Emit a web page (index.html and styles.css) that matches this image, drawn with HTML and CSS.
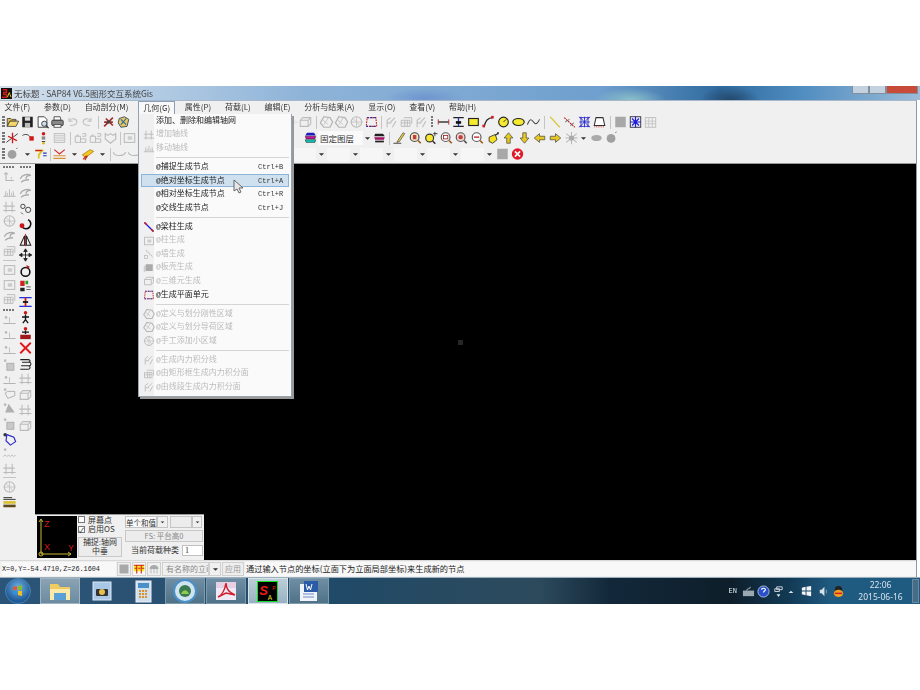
FILE: index.html
```html
<!DOCTYPE html>
<html lang="zh">
<head>
<meta charset="utf-8">
<title>SAP84</title>
<link rel="stylesheet" href="styles.css">
</head>
<body>
<svg class="defs" aria-hidden="true">
<symbol id="open" viewBox="0 0 16 16"><path d="M2 4h4l1 1h5v2H5L2 13z" fill="#e8c040" stroke="#444"/><path d="M5 7h10l-3 6H2z" fill="#f5d868" stroke="#444"/></symbol>
<symbol id="save" viewBox="0 0 16 16"><rect x="2" y="2" width="12" height="12" fill="#222"/><rect x="5" y="2.5" width="6" height="4" fill="#ddd"/><rect x="5" y="9" width="6" height="5" fill="#bbb"/></symbol>
<symbol id="prev" viewBox="0 0 16 16"><path d="M3 2h7l3 3v9H3z" fill="#fff" stroke="#333"/><circle cx="10" cy="10" r="3" fill="#cde" stroke="#333"/><path d="M12 12l3 3" stroke="#333" stroke-width="1.5"/></symbol>
<symbol id="print" viewBox="0 0 16 16"><path d="M4 2h7l1 4H4z" fill="#fff" stroke="#444"/><rect x="1.5" y="6" width="13" height="6" rx="1" fill="#888" stroke="#333"/><rect x="4" y="11" width="8" height="3" fill="#fff" stroke="#444"/></symbol>
<symbol id="undo" viewBox="0 0 16 16"><path d="M4 6c3-3 9-2 9 2s-4 4-8 4M4 3v4h4" fill="none" stroke="#c4c4c4" stroke-width="1.3"/></symbol>
<symbol id="redo" viewBox="0 0 16 16"><path d="M12 6C9 3 3 4 3 8s4 4 8 4M12 3v4H8" fill="none" stroke="#c4c4c4" stroke-width="1.3"/></symbol>
<symbol id="bug" viewBox="0 0 16 16"><path d="M3 13L13 3M5 4l8 8M3 8h10" stroke="#a03030" stroke-width="2"/><circle cx="8" cy="8" r="2" fill="#444"/></symbol>
<symbol id="cube" viewBox="0 0 16 16"><path d="M3 4l6-2 5 3-2 8-7 1-3-5z" fill="#e8c860" stroke="#345" /><path d="M5 5l6 6M11 4l-6 7" stroke="#26a" stroke-width="1.2"/></symbol>
<symbol id="box" viewBox="0 0 16 16"><path d="M2 6h9v7H2zM2 6l3-3h9v7l-3 3M11 6l3-3" fill="none" stroke="#bbb" stroke-width="1.2"/></symbol>
<symbol id="hex" viewBox="0 0 16 16"><path d="M5 2l7 1 3 5-3 6-7 0-4-5z" fill="none" stroke="#b4b4b4" stroke-width="1.4"/><path d="M4 6l6 5M10 3L5 11" stroke="#c4c4c4"/></symbol>
<symbol id="diam" viewBox="0 0 16 16"><circle cx="8" cy="8" r="6" fill="none" stroke="#bbb" stroke-width="1.3"/><path d="M1 8h14M8 2v12M4 4l8 8" stroke="#c4c4c4"/></symbol>
<symbol id="plane" viewBox="0 0 16 16"><path d="M3 3h10l1 10H2z" fill="none" stroke="#c02020" stroke-dasharray="2 1" stroke-width="1.2"/><path d="M3 3h10M2 13h12" stroke="#2030c0" stroke-dasharray="2 2" stroke-width="1.2"/></symbol>
<symbol id="curveg" viewBox="0 0 16 16"><path d="M3 14V6l4-3M7 8l5-5M3 9h5M9 14l4-7" fill="none" stroke="#c0c0c0" stroke-width="1.3"/></symbol>
<symbol id="grid3" viewBox="0 0 16 16"><path d="M2 6h10v7H2zM5 3h9v7M2 9h10M6 6v7M9 6v7" fill="none" stroke="#bbb" stroke-width="1.1"/></symbol>
<symbol id="lineh" viewBox="0 0 16 16"><path d="M2 8h12" stroke="#222" stroke-width="1.5"/><path d="M2 5v6M14 5v6" stroke="#c02020"/></symbol>
<symbol id="ibeam" viewBox="0 0 16 16"><path d="M2 3h12M2 13h12" stroke="#222" stroke-width="1.6"/><path d="M8 3v10" stroke="#2030c0" stroke-width="1.5"/><path d="M5 7h6v3H5z" fill="#111"/></symbol>
<symbol id="rect" viewBox="0 0 16 16"><rect x="2.500" y="4" width="11" height="8" fill="#f6ea30" stroke="#222" stroke-width="1.300"/></symbol>
<symbol id="arc" viewBox="0 0 16 16"><path d="M3 14C4 7 8 3 13 3" fill="none" stroke="#222" stroke-width="1.400"/><rect x="1" y="11" width="3" height="3" fill="#d02020"/><rect x="11" y="1" width="3" height="3" fill="#d02020"/></symbol>
<symbol id="circ" viewBox="0 0 16 16"><circle cx="8" cy="8" r="5.500" fill="#f6ea30" stroke="#222" stroke-width="1.300"/><path d="M8 8l3-3" stroke="#222"/></symbol>
<symbol id="ell" viewBox="0 0 16 16"><ellipse cx="8" cy="8" rx="6.500" ry="4" fill="#f6ea30" stroke="#222" stroke-width="1.300"/></symbol>
<symbol id="wave" viewBox="0 0 16 16"><path d="M1 11c3-8 5-6 7-3s4 3 7-3" fill="none" stroke="#444" stroke-width="1.200"/></symbol>
<symbol id="waveg" viewBox="0 0 16 16"><circle cx="3" cy="3" r="1.500" fill="#bbb"/><path d="M1 11l2-2 2 2 2-2 2 2 2-2 2 2 2-2" fill="none" stroke="#bbb" stroke-width="1.100"/></symbol>
<symbol id="diag" viewBox="0 0 16 16"><path d="M3 2l11 12" stroke="#d8c840" stroke-width="1.500"/></symbol>
<symbol id="diag2" viewBox="0 0 16 16"><path d="M2 3l12 11" stroke="#c02020" stroke-width="1.400" stroke-dasharray="2 1"/><path d="M3 8l5-3M9 12l4-3" stroke="#555"/></symbol>
<symbol id="wallg" viewBox="0 0 16 16"><path d="M4 3l9 9" stroke="#bbb" stroke-width="1.500" stroke-dasharray="2 1"/><rect x="2" y="10" width="4" height="4" fill="none" stroke="#bbb"/></symbol>
<symbol id="netb" viewBox="0 0 16 16"><path d="M2 3h12M2 8h12M2 13h12M4 2v12M8 2v12M12 2v12M2 2l12 12M14 2L2 14" stroke="#2828c8" fill="none"/></symbol>
<symbol id="trap" viewBox="0 0 16 16"><path d="M4 3h8l2 9H2z" fill="#fff" stroke="#333" stroke-width="1.200"/><path d="M2 13.500h12" stroke="#c02020" stroke-dasharray="1 1"/></symbol>
<symbol id="sq" viewBox="0 0 16 16"><rect x="2" y="2" width="12" height="12" fill="#a8a8a8"/></symbol>
<symbol id="netbx" viewBox="0 0 16 16"><rect x="2" y="2" width="12" height="12" fill="#eef" stroke="#223"/><path d="M4 4l8 8M12 4l-8 8M8 2v12M2 8h12" stroke="#1c1cd0" stroke-width="1.400"/></symbol>
<symbol id="grs" viewBox="0 0 16 16"><rect x="2" y="3" width="12" height="11" fill="none" stroke="#bbb"/><path d="M2 7h12M2 10h12M6 3v11M10 3v11" stroke="#c4c4c4"/></symbol>
<symbol id="star" viewBox="0 0 16 16"><path d="M1 13L14 3" stroke="#333"/><path d="M8 2v12M3 6l10 5" stroke="#d01818" stroke-width="1.500"/></symbol>
<symbol id="dart" viewBox="0 0 16 16"><path d="M1 5c4-2 7-1 9 2" fill="none" stroke="#333"/><rect x="9" y="6" width="5" height="5" fill="#d01818"/></symbol>
<symbol id="dots" viewBox="0 0 16 16"><circle cx="8" cy="3" r="2" fill="#d01818"/><path d="M6 7h4M10 9H6M6 12h4M9 14H7" stroke="#333"/><circle cx="8" cy="14" r="1.500" fill="#d8c020"/></symbol>
<symbol id="hatch" viewBox="0 0 16 16"><rect x="2" y="3" width="12" height="10" fill="none" stroke="#bbb"/><path d="M2 5h12M2 7h12M2 9h12M2 11h12" stroke="#c8c8c8"/></symbol>
<symbol id="colm" viewBox="0 0 16 16"><path d="M2 6h6v7H2zM8 9h6v4H8M10 3h4v3h-4M5 6V4M5 4l-2 2" fill="none" stroke="#bbb" stroke-width="1.100"/></symbol>
<symbol id="shld" viewBox="0 0 16 16"><path d="M2 3l3 2 3-2 3 2 3-2v6l-6 5-6-5z" fill="none" stroke="#bbb" stroke-width="1.300"/></symbol>
<symbol id="frm" viewBox="0 0 16 16"><rect x="2" y="3" width="12" height="10" fill="none" stroke="#bbb" stroke-width="1.200"/><rect x="6" y="6" width="5" height="4" fill="#ccc"/></symbol>
<symbol id="graybox" viewBox="0 0 16 16"><path d="M4 3h9v9H4z" fill="#aaa"/><path d="M1 6l3-3v9l-3 2z" fill="#ccc"/></symbol>
<symbol id="layers" viewBox="0 0 16 16"><path d="M4 2h8l2 3H2z" fill="#1c1cc0"/><path d="M2 6h12l-1 3H3z" fill="#d010a0" stroke="#222" stroke-width=".6"/><path d="M2 10h12l-1 3H3z" fill="#10c8b8" stroke="#222" stroke-width=".6"/></symbol>
<symbol id="layers2" viewBox="0 0 16 16"><path d="M3 3h9l2 3H2z" fill="#222"/><path d="M2 7h12l-1 3H3z" fill="#a01060"/><path d="M3 11h10v2H3z" fill="#222"/></symbol>
<symbol id="pen" viewBox="0 0 16 16"><path d="M6 11l6-9 2 1-6 9-3 1z" fill="#e8d040" stroke="#333" stroke-width=".7"/><path d="M1 14h9" stroke="#333"/></symbol>
<symbol id="zoom" viewBox="0 0 16 16"><circle cx="7" cy="7" r="5" fill="#f4e8c8" stroke="#444" stroke-width="1.300"/><rect x="5" y="4.500" width="4" height="5" fill="#c04040"/><path d="M11 11l3 3" stroke="#a06020" stroke-width="2"/></symbol>
<symbol id="zoomy" viewBox="0 0 16 16"><circle cx="7" cy="8" r="4.500" fill="#f8e830" stroke="#333" stroke-width="1.300"/><path d="M10.500 11.500l3 3" stroke="#333" stroke-width="1.800"/><path d="M13 1v5M11 3h5" stroke="#333"/></symbol>
<symbol id="zoomw" viewBox="0 0 16 16"><circle cx="7" cy="7" r="5" fill="#fff" stroke="#555" stroke-width="1.300"/><rect x="4.500" y="5" width="5" height="4" fill="none" stroke="#a02020"/><path d="M11 11l3 3" stroke="#a06020" stroke-width="2"/></symbol>
<symbol id="zoomr" viewBox="0 0 16 16"><circle cx="7" cy="7" r="5" fill="#f0d8d0" stroke="#555" stroke-width="1.300"/><circle cx="7" cy="7" r="2.500" fill="#c04040"/><path d="M11 11l3 3" stroke="#555" stroke-width="2"/></symbol>
<symbol id="zoomm" viewBox="0 0 16 16"><circle cx="7" cy="7" r="5" fill="#fff" stroke="#555" stroke-width="1.300"/><path d="M4 7h6" stroke="#c02020" stroke-width="1.500"/><path d="M11 11l3 3" stroke="#a06020" stroke-width="2"/></symbol>
<symbol id="pan" viewBox="0 0 16 16"><path d="M3 7l7-3 2 6-5 4-4-2z" fill="#f6e020" stroke="#333"/><path d="M10 5l4-3M13 1v3" stroke="#222" stroke-width="1.300"/></symbol>
<symbol id="up" viewBox="0 0 16 16"><path d="M8 2l5 6h-3v6H6V8H3z" fill="#e8c820" stroke="#444" stroke-width=".8"/></symbol>
<symbol id="down" viewBox="0 0 16 16"><path d="M8 14l5-6h-3V2H6v6H3z" fill="#e8c820" stroke="#444" stroke-width=".8"/></symbol>
<symbol id="left" viewBox="0 0 16 16"><path d="M2 8l6-5v3h6v4H8v3z" fill="#e8c820" stroke="#444" stroke-width=".8"/></symbol>
<symbol id="right" viewBox="0 0 16 16"><path d="M14 8L8 3v3H2v4h6v3z" fill="#e8c820" stroke="#444" stroke-width=".8"/></symbol>
<symbol id="spark" viewBox="0 0 16 16"><path d="M2 3l12 10M14 3L2 13M8 1v14M1 8h14" stroke="#b8b8b8" stroke-width="1.200"/><circle cx="8" cy="8" r="3" fill="#aaa"/></symbol>
<symbol id="eye" viewBox="0 0 16 16"><ellipse cx="8" cy="8" rx="6" ry="3.500" fill="#aaa"/></symbol>
<symbol id="ball" viewBox="0 0 16 16"><circle cx="7.500" cy="8.500" r="5" fill="#a0a0a0"/><path d="M12 2l2-1" stroke="#888"/></symbol>
<symbol id="yeq" viewBox="0 0 16 16"><path d="M2 4h8L6 9v4" fill="none" stroke="#e0c020" stroke-width="2"/><path d="M2 4h8" stroke="#d02020" stroke-width="1.500"/><path d="M11 7h4M11 10h4" stroke="#2030c0" stroke-width="1.400"/></symbol>
<symbol id="redm" viewBox="0 0 16 16"><path d="M2 3l6 5 6-5" fill="none" stroke="#d03030" stroke-width="1.400"/><path d="M1 10h14M1 13h14" stroke="#d89030" stroke-width="1.400"/></symbol>
<symbol id="yellw" viewBox="0 0 16 16"><path d="M2 9l9-6 4 2-9 7z" fill="#f4c820" stroke="#a07000" stroke-width=".8"/><path d="M3 14l4-4M8 10l-3 5" stroke="#c03020" stroke-width="1.300"/></symbol>
<symbol id="smile" viewBox="0 0 16 16"><path d="M1 6c1 5 12 5 14 0" fill="none" stroke="#b8b8b8" stroke-width="1.300"/></symbol>
<symbol id="redx" viewBox="0 0 16 16"><circle cx="8" cy="8" r="6.500" fill="#e01828"/><path d="M5 5l6 6M11 5l-6 6" stroke="#fff" stroke-width="1.800"/></symbol>
<symbol id="axis" viewBox="0 0 16 16"><path d="M4 3v9h9M4 3L2 5M4 3l2 2" fill="none" stroke="#b4b4b4" stroke-width="1.200"/><path d="M10 8v3" stroke="#c0c0c0"/></symbol>
<symbol id="comb" viewBox="0 0 16 16"><path d="M1 13h14M3 13l1-6M8 13V5M13 13l-1-6M5 13l1-4M11 13l-1-4" stroke="#bbb" stroke-width="1.100"/></symbol>
<symbol id="axisb" viewBox="0 0 16 16"><path d="M4 2v12M11 2v12M1 12h14M1 7h13" stroke="#bbb" stroke-width="1.200"/></symbol>
<symbol id="hook" viewBox="0 0 16 16"><path d="M2 9c2-5 8-6 12-4-4 0-6 2-5 4M3 13c3-3 6-3 9-3" fill="none" stroke="#aaa" stroke-width="1.500"/></symbol>
<symbol id="rings" viewBox="0 0 16 16"><circle cx="5" cy="5" r="2.500" fill="none" stroke="#333"/><circle cx="11" cy="9" r="3" fill="none" stroke="#333"/><path d="M3 12l2 2" stroke="#333"/></symbol>
<symbol id="rot" viewBox="0 0 16 16"><path d="M11 3a5.500 5.500 0 1 1-7 8" fill="none" stroke="#111" stroke-width="1.800"/><circle cx="4" cy="10" r="2.800" fill="#c81818"/></symbol>
<symbol id="mirror" viewBox="0 0 16 16"><path d="M7 3L2 14h5zM9 3l5 11H9z" fill="none" stroke="#222" stroke-width="1.200"/><path d="M8 1v14" stroke="#a02020"/></symbol>
<symbol id="move" viewBox="0 0 16 16"><path d="M8 1v14M1 8h14M8 1L6 4h4zM8 15l-2-3h4zM1 8l3-2v4zM15 8l-3-2v4z" fill="#222" stroke="#222"/></symbol>
<symbol id="rotb" viewBox="0 0 16 16"><circle cx="8" cy="9" r="5" fill="none" stroke="#111" stroke-width="1.800"/><path d="M9 1l4 2-3 3z" fill="#b02020"/></symbol>
<symbol id="leg" viewBox="0 0 16 16"><rect x="2" y="2" width="5" height="6" fill="#d02020"/><rect x="8" y="2" width="3" height="4" fill="#20a020"/><path d="M2 10h5v4H2z" fill="#222"/><path d="M9 9h5M9 12h5" stroke="#555"/></symbol>
<symbol id="beamr" viewBox="0 0 16 16"><path d="M1 3h14" stroke="#2030e0" stroke-width="1.500"/><path d="M1 13h14" stroke="#2030e0" stroke-width="1.500"/><path d="M8 3v10" stroke="#d01818" stroke-width="2"/><path d="M5 8h6" stroke="#111" stroke-width="2"/></symbol>
<symbol id="man" viewBox="0 0 16 16"><circle cx="8" cy="3" r="2" fill="#d01818"/><path d="M8 5v6M4 8h8M8 11l-3 4M8 11l3 4" stroke="#111" stroke-width="1.500"/></symbol>
<symbol id="mans" viewBox="0 0 16 16"><circle cx="8" cy="3" r="2" fill="#d01818"/><path d="M8 5v4M4 7h8" stroke="#111" stroke-width="1.500"/><rect x="2" y="10" width="12" height="5" fill="#a01818"/></symbol>
<symbol id="dotl" viewBox="0 0 16 16"><path d="M1 12h14" stroke="#aaa"/><circle cx="4" cy="5" r="1.500" fill="#bbb"/><path d="M8 5v6" stroke="#bbb"/></symbol>
<symbol id="xred" viewBox="0 0 16 16"><path d="M2 2l12 12M14 2L2 14" stroke="#e01818" stroke-width="2.200"/></symbol>
<symbol id="coil" viewBox="0 0 16 16"><path d="M2 3h9c3 0 3 3 0 3H4M4 6h8c3 0 3 4 0 4H3M3 10h8c3 0 3 4 0 4H2" fill="none" stroke="#222" stroke-width="1.200"/></symbol>
<symbol id="boxd" viewBox="0 0 16 16"><circle cx="3" cy="3" r="1.500" fill="#bbb"/><rect x="5" y="6" width="8" height="8" fill="#c8c8c8" stroke="#aaa"/></symbol>
<symbol id="ddp" viewBox="0 0 16 16"><circle cx="3" cy="3" r="1.500" fill="#bbb"/><path d="M3 7l3 6 8-3V5H6z" fill="none" stroke="#aaa"/></symbol>
<symbol id="cone" viewBox="0 0 16 16"><circle cx="3" cy="3" r="1.500" fill="#bbb"/><path d="M7 2l7 10H3z" fill="#b0b0b0"/></symbol>
<symbol id="plbl" viewBox="0 0 16 16"><circle cx="3" cy="3" r="2" fill="#333"/><path d="M5 3l8 3 2 5-6 4-5-5z" fill="none" stroke="#2828c8" stroke-width="1.300"/></symbol>
<symbol id="rul" viewBox="0 0 16 16"><path d="M1 3h10M1 5h14" stroke="#222"/><rect x="1" y="7" width="14" height="3" fill="#d8c030"/><rect x="1" y="11" width="14" height="3" fill="#604818"/></symbol>
<symbol id="lnb" viewBox="0 0 16 16"><path d="M2 2l12 12" stroke="#1818d0" stroke-width="1.600"/><path d="M2 2l3 3" stroke="#d01818" stroke-width="2.200"/><path d="M11 11l3 3" stroke="#d01818" stroke-width="2.200"/></symbol>
<symbol id="grip" viewBox="0 0 16 16"><path d="M3 2v12M12 5v7" stroke="#bbb" stroke-width="1.300"/></symbol>
<symbol id="arrow" viewBox="0 0 10 16"><path d="M2 7h6l-3 3z" fill="#333"/></symbol>
</svg>

<div class="app">
  <div class="title">
    <svg class="logo" viewBox="0 0 12 12"><rect width="12" height="12" fill="#111"/><path d="M2 2h4v3H3v2h3v3H1" fill="none" stroke="#d01818" stroke-width="1.600"/><path d="M7 10l2-5 2 5" stroke="#e8d820" fill="none"/></svg>
    <span class="title-text">无标题 - SAP84 V6.5图形交互系统Gis</span>
    <div class="winctl"><span class="wb"></span><span class="wb"></span><span class="wb wb-x"></span></div>
  </div>
  <div class="client">
    <nav class="menubar">
      <span>文件(F)</span><span>参数(D)</span><span>自动剖分(M)</span><span class="open">几何(G)</span><span>属性(P)</span><span>荷载(L)</span><span>编辑(E)</span><span>分析与结果(A)</span><span>显示(O)</span><span>查看(V)</span><span>帮助(H)</span>
    </nav>
    <div class="tools">
      <div class="row">
        <div class="lgroup">
          <i class="gr"></i>
          <svg class="i"><use href="#open"/></svg><svg class="i"><use href="#save"/></svg><svg class="i"><use href="#prev"/></svg><svg class="i"><use href="#print"/></svg><svg class="i"><use href="#undo"/></svg><svg class="i"><use href="#redo"/></svg>
          <i class="sep"></i>
          <svg class="i"><use href="#bug"/></svg><svg class="i"><use href="#cube"/></svg>
        </div>
        <div class="rgroup">
          <svg class="i i-grip"><use href="#grip"/></svg>
          <svg class="i"><use href="#box"/></svg><i class="sep"></i>
          <svg class="i"><use href="#hex"/></svg><svg class="i"><use href="#hex"/></svg><svg class="i"><use href="#diam"/></svg><svg class="i"><use href="#plane"/></svg><i class="sep sep-n"></i>
          <svg class="i"><use href="#curveg"/></svg><svg class="i"><use href="#grid3"/></svg><svg class="i"><use href="#curveg"/></svg><i class="gr gr-d"></i>
          <svg class="i"><use href="#lineh"/></svg><svg class="i"><use href="#ibeam"/></svg><svg class="i"><use href="#rect"/></svg><svg class="i"><use href="#arc"/></svg><svg class="i"><use href="#circ"/></svg><svg class="i"><use href="#ell"/></svg><svg class="i"><use href="#wave"/></svg><i class="sep"></i>
          <svg class="i"><use href="#diag"/></svg><svg class="i"><use href="#diag2"/></svg><svg class="i"><use href="#netb"/></svg><svg class="i"><use href="#trap"/></svg><i class="sep"></i>
          <svg class="i"><use href="#sq"/></svg><svg class="i"><use href="#netbx"/></svg><svg class="i"><use href="#grs"/></svg>
        </div>
      </div>
      <div class="row">
        <div class="lgroup">
          <i class="gr gr-s"></i>
          <svg class="i"><use href="#star"/></svg><svg class="i sh"><use href="#dart"/></svg><svg class="i"><use href="#dots"/></svg><svg class="i sh"><use href="#hatch"/></svg>
          <i class="sep"></i>
          <svg class="i"><use href="#colm"/></svg><svg class="i"><use href="#colm"/></svg><svg class="i"><use href="#shld"/></svg>
          <i class="sep sep-t"></i>
          <svg class="i"><use href="#frm"/></svg>
        </div>
        <div class="rgroup rgroup-2">
          <svg class="i"><use href="#layers"/></svg>
          <div class="layercombo">固定图层</div>
          <svg class="dd"><use href="#arrow"/></svg>
          <svg class="i"><use href="#layers2"/></svg><i class="sep sep-t"></i>
          <div class="tight">
            <svg class="i"><use href="#pen"/></svg><svg class="i"><use href="#zoom"/></svg><svg class="i"><use href="#zoomy"/></svg><svg class="i"><use href="#zoomw"/></svg><svg class="i"><use href="#zoomr"/></svg><svg class="i"><use href="#zoomm"/></svg><svg class="i"><use href="#pan"/></svg><svg class="i"><use href="#up"/></svg><svg class="i"><use href="#down"/></svg><svg class="i"><use href="#left"/></svg><svg class="i"><use href="#right"/></svg><svg class="i"><use href="#spark"/></svg>
            <svg class="dd"><use href="#arrow"/></svg><svg class="i"><use href="#eye"/></svg><svg class="i"><use href="#ball"/></svg>
          </div>
        </div>
      </div>
      <div class="row">
        <div class="lgroup">
          <i class="gr gr-s"></i>
          <svg class="i"><use href="#ball"/></svg><svg class="dd dd-m"><use href="#arrow"/></svg><svg class="i"><use href="#yeq"/></svg><i class="sep sep-t"></i>
          <svg class="i"><use href="#redm"/></svg><svg class="dd dd-m"><use href="#arrow"/></svg><svg class="i"><use href="#yellw"/></svg><svg class="dd dd-m"><use href="#arrow"/></svg><i class="sep sep-t"></i>
          <svg class="i"><use href="#smile"/></svg><svg class="i"><use href="#smile"/></svg>
        </div>
        <div class="rgroup rgroup-3">
          <div class="ecombo"><i></i><svg class="dd"><use href="#arrow"/></svg></div>
          <div class="ecombo"><i></i><svg class="dd"><use href="#arrow"/></svg></div>
          <div class="ecombo"><i></i><svg class="dd"><use href="#arrow"/></svg></div>
          <div class="ecombo"><i></i><svg class="dd"><use href="#arrow"/></svg></div>
          <div class="ecombo"><i></i><svg class="dd"><use href="#arrow"/></svg></div>
          <div class="ecombo"><i></i><svg class="dd"><use href="#arrow"/></svg></div>
          <svg class="i"><use href="#sq"/></svg><svg class="i"><use href="#redx"/></svg>
        </div>
      </div>
    </div>

    <div class="work">
      <aside class="side">
        <div class="col">
          <i class="dash"></i>
          <svg class="i"><use href="#axis"/></svg><svg class="i"><use href="#comb"/></svg><svg class="i"><use href="#axisb"/></svg><svg class="i"><use href="#diam"/></svg><svg class="i"><use href="#hook"/></svg><svg class="i"><use href="#grid3"/></svg>
          <i class="hsep"></i>
          <svg class="i"><use href="#frm"/></svg><svg class="i"><use href="#frm"/></svg><svg class="i"><use href="#grid3"/></svg>
          <i class="dash"></i>
          <svg class="i"><use href="#dotl"/></svg><svg class="i"><use href="#dotl"/></svg><svg class="i"><use href="#dotl"/></svg><svg class="i"><use href="#boxd"/></svg><svg class="i"><use href="#dotl"/></svg><svg class="i"><use href="#ddp"/></svg><svg class="i"><use href="#cone"/></svg><svg class="i"><use href="#boxd"/></svg><svg class="i"><use href="#plbl"/></svg><svg class="i"><use href="#waveg"/></svg><svg class="i"><use href="#axisb"/></svg>
          <i class="hsep"></i>
          <svg class="i"><use href="#diam"/></svg><svg class="i"><use href="#rul"/></svg>
        </div>
        <div class="col">
          <i class="dash"></i>
          <svg class="i"><use href="#hook"/></svg><svg class="i"><use href="#hook"/></svg><svg class="i"><use href="#rings"/></svg><svg class="i"><use href="#rot"/></svg><svg class="i"><use href="#mirror"/></svg><svg class="i"><use href="#move"/></svg><svg class="i"><use href="#rotb"/></svg><svg class="i"><use href="#leg"/></svg><svg class="i"><use href="#beamr"/></svg><svg class="i"><use href="#man"/></svg><svg class="i"><use href="#mans"/></svg><svg class="i"><use href="#xred"/></svg><svg class="i"><use href="#coil"/></svg><svg class="i"><use href="#axisb"/></svg><svg class="i"><use href="#box"/></svg><svg class="i"><use href="#axisb"/></svg><svg class="i"><use href="#box"/></svg>
        </div>
      </aside>
      <main class="canvas">
        <i class="origin"></i>
        <section class="panel">
          <svg class="axes" viewBox="0 0 40 42">
            <path d="M4 38V3M2 6l2-3 2 3M4 38h30M31 36l3 2-3 2" fill="none" stroke="#c8b830"/>
            <circle cx="4" cy="38" r="2" fill="none" stroke="#c8b830"/>
            <text x="7" y="11" class="axl">Z</text><text x="7" y="34" class="axl">X</text><text x="31" y="35" class="axl">Y</text>
          </svg>
          <div class="pc1">
            <label class="chk"><i class="box"></i>屏幕点</label>
            <label class="chk"><i class="box on">✓</i>启用OS</label>
            <div class="snap">捕捉:轴网<br>中垂</div>
          </div>
          <div class="pc2">
            <div class="prow">
              <span class="pf pf-a">单个和值</span><span class="pdd"><svg class="dd"><use href="#arrow"/></svg></span>
              <span class="pf pf-b"></span><span class="pdd pdd-l"><svg class="dd"><use href="#arrow"/></svg></span>
            </div>
            <div class="fs">FS: 平台高0</div>
            <div class="prow prow-c"><span>当前荷载种类</span><span class="num">1</span></div>
          </div>
        </section>
      </main>
    </div>

    <footer class="status">
      <div class="coord">X=0,Y=-54.4710,Z=26.1604</div>
      <span class="st-btn"><svg class="i"><use href="#sq"/></svg></span>
      <span class="st-btn st-on"><svg class="i" viewBox="0 0 16 16"><path d="M1 3h14v8H1z" fill="#f8e820"/><path d="M1 3h14M5 3v11M11 3v11" stroke="#d01818" stroke-width="1.400"/><path d="M2 7h3M7 7h3M12 7h3" stroke="#d01818" stroke-width="1.400"/></svg></span>
      <span class="st-btn"><svg class="i" viewBox="0 0 16 16"><path d="M2 8c0-7 12-7 12 0z" fill="#aaa"/><path d="M4 8v6M8 8v6M12 8v6" stroke="#aaa"/></svg></span>
      <div class="st-combo"><span>有名称的立i</span></div>
      <span class="st-dd"><svg class="dd"><use href="#arrow"/></svg></span>
      <span class="apply">应用</span>
      <div class="st-msg">通过输入节点的坐标(立面下为立面局部坐标)来生成新的节点</div>
    </footer>
  </div>

  <div class="menu">
    <div class="mi"><span class="t">添加、删除和编辑轴网</span></div>
    <div class="mi dis"><svg class="mic"><use href="#axisb"/></svg><span class="t">增加轴线</span></div>
    <div class="mi dis"><svg class="mic"><use href="#comb"/></svg><span class="t">移动轴线</span></div>
    <hr>
    <div class="mi"><span class="t">@捕捉生成节点</span><span class="k">Ctrl+B</span></div>
    <div class="mi hot"><span class="t">@绝对坐标生成节点</span><span class="k">Ctrl+A</span></div>
    <div class="mi"><span class="t">@相对坐标生成节点</span><span class="k">Ctrl+R</span></div>
    <div class="mi"><span class="t">@交线生成节点</span><span class="k">Ctrl+J</span></div>
    <hr>
    <div class="mi"><svg class="mic"><use href="#lnb"/></svg><span class="t">@梁柱生成</span></div>
    <div class="mi dis"><svg class="mic"><use href="#frm"/></svg><span class="t">@柱生成</span></div>
    <div class="mi dis"><svg class="mic"><use href="#wallg"/></svg><span class="t">@墙生成</span></div>
    <div class="mi dis"><svg class="mic"><use href="#graybox"/></svg><span class="t">@板壳生成</span></div>
    <div class="mi dis"><svg class="mic"><use href="#box"/></svg><span class="t">@三维元生成</span></div>
    <div class="mi"><svg class="mic"><use href="#plane"/></svg><span class="t">@生成平面单元</span></div>
    <hr>
    <div class="mi dis"><svg class="mic"><use href="#hex"/></svg><span class="t">@定义与划分刚性区域</span></div>
    <div class="mi dis"><svg class="mic"><use href="#hex"/></svg><span class="t">@定义与划分导荷区域</span></div>
    <div class="mi dis"><svg class="mic"><use href="#diam"/></svg><span class="t">@手工添加小区域</span></div>
    <hr>
    <div class="mi dis"><svg class="mic"><use href="#curveg"/></svg><span class="t">@生成内力积分线</span></div>
    <div class="mi dis"><svg class="mic"><use href="#grid3"/></svg><span class="t">@由矩形框生成内力积分面</span></div>
    <div class="mi dis"><svg class="mic"><use href="#curveg"/></svg><span class="t">@由线段生成内力积分面</span></div>
  </div>
  <svg class="cursor" viewBox="0 0 11 15"><path d="M1 1v11l3-2 2 4 2-1-2-4h4z" fill="#e8e8e8" stroke="#666"/></svg>

  <div class="taskbar">
    <div class="orb"><svg viewBox="0 0 14 14"><path d="M2 3l4-1v4H2z" fill="#e8582a"/><path d="M7 2l4-1v5H7z" fill="#80c030"/><path d="M2 7h4v4l-4-1z" fill="#3090e0"/><path d="M7 7h4v5l-4-1z" fill="#f0c020"/></svg></div>
    <div class="tasks">
      <span class="task task-lt"><svg viewBox="0 0 24 24"><path d="M2 5h8l2 3h10v13H2z" fill="#f0cc60"/><path d="M2 10h20v11H2z" fill="#fbe9a8"/><rect x="6" y="14" width="12" height="7" fill="#5aa0d8"/></svg></span>
      <span class="task task-gh"><svg viewBox="0 0 24 24"><rect x="3" y="3" width="18" height="18" fill="#a8c8e8" stroke="#dfe8f0"/><rect x="6" y="10" width="12" height="7" rx="1" fill="#333"/><circle cx="12" cy="13" r="3" fill="#e8c050"/></svg></span>
      <span class="task task-gh"><svg viewBox="0 0 24 24"><rect x="5" y="2" width="15" height="21" fill="#cfe0ec" stroke="#eef"/><rect x="7" y="4" width="11" height="5" fill="#4a90c8"/><path d="M8 12h9M8 15h9M8 18h9" stroke="#d89030" stroke-width="2" stroke-dasharray="2 1"/></svg></span>
      <span class="task"><svg viewBox="0 0 24 24"><circle cx="12" cy="12" r="11" fill="#cfe4f0" stroke="#4a90c8" stroke-width="2"/><circle cx="12" cy="12" r="6" fill="#3a7a50"/><path d="M8 15c2-5 6-5 8 0z" fill="#90c850"/></svg></span>
      <span class="task"><svg viewBox="0 0 24 24"><rect x="2" y="3" width="20" height="18" fill="#f0e8f4"/><rect x="2" y="3" width="20" height="6" fill="#e0c0d8" opacity=".6"/><path d="M4 18c4-2 7-8 8-14 0 6 4 10 9 12M4 18l8-4 9 2" fill="none" stroke="#d02030" stroke-width="1.500"/></svg></span>
      <span class="task task-on"><span class="saplogo"><b>S</b><em>A</em><u>P</u></span></span>
      <span class="task"><svg viewBox="0 0 24 24"><rect x="3" y="5" width="17" height="17" fill="#f0f4fa"/><rect x="7" y="2" width="14" height="11" fill="#2a5aa8"/><path d="M9 5l1.500 6L12 7l1.500 4L15 5" fill="none" stroke="#fff"/><path d="M6 15h11M6 18h11" stroke="#6a8ac8"/></svg></span>
    </div>
    <div class="tray">
      <span class="en">EN</span>
      <svg class="ti" viewBox="0 0 14 14"><rect x="1" y="6" width="12" height="6" fill="#9aa8b0"/><path d="M5 6c0-3 4-1 4-4" stroke="#c0c8d0" fill="none"/></svg>
      <svg class="ti" viewBox="0 0 14 14"><circle cx="7" cy="7" r="6" fill="#2850c8" stroke="#b0c0e0"/><path d="M5 5c0-2 4-2 4 0 0 1.500-2 1.500-2 3" fill="none" stroke="#fff" stroke-width="1.300"/></svg>
      <svg class="ti" viewBox="0 0 14 14"><path d="M5 2h6v3H5zM3 4h5v3H3z" fill="none" stroke="#d0d8e0"/><path d="M5 10h4l-2 3z" fill="#e0e8f0"/></svg>
      <svg class="ti ti-s" viewBox="0 0 10 14"><path d="M2 9l3-3 3 3z" fill="#dce4ec"/></svg>
      <svg class="ti ti-w" viewBox="0 0 14 14"><path d="M2 3l4-1v4H2zM7 2l5-1v5H7zM2 7h4v4l-4-1zM7 7h5v5l-5-1z" fill="#f4f6f8"/></svg>
      <svg class="ti" viewBox="0 0 14 14"><path d="M3 5h2l3-3v10L5 9H3z" fill="#d8e0e8"/><path d="M10 5v4" stroke="#9ab"/></svg>
      <svg class="ti" viewBox="0 0 14 14"><ellipse cx="7" cy="5" rx="4" ry="4" fill="#222"/><ellipse cx="7" cy="9" rx="5" ry="4" fill="#f0a020"/><path d="M3 9h8" stroke="#d02020" stroke-width="1.500"/></svg>
      <div class="clock"><span>22:06</span><span>2015-06-16</span></div>
      <i class="showd"></i>
    </div>
  </div>
</div>
</body>
</html>
```
FILE: styles.css
```css
* { box-sizing: border-box; }
html, body { margin: 0; padding: 0; background: #fff; }
body { width: 920px; height: 690px; padding-top: 86px; overflow: hidden; font-family: "Noto Sans CJK SC", "Noto Sans", sans-serif; font-size: 8px; line-height: 1; color: #333; }
.defs { position: absolute; width: 0; height: 0; }
.app { position: relative; width: 920px; height: 518px; display: flex; flex-direction: column; filter: blur(.45px); }
i { font-style: normal; display: block; }

.title { height: 14px; display: flex; align-items: center; padding-left: 1px; background: radial-gradient(ellipse 30px 14px at 730px 14px, #24476a, transparent), radial-gradient(ellipse 36px 12px at 630px 14px, #8cc0c8, transparent), radial-gradient(ellipse 40px 10px at 425px 12px, #6f95cf, transparent), linear-gradient(90deg, #d4dfea 0, #b4cce4 150px, #8fb4d8 300px, #6f9fce 600px, #2f6a9e 720px, #4f8cc0 800px, #9cbcd8 920px); }
.logo { width: 11px; height: 11px; }
.title-text { margin-left: 2px; font-size: 8.500px; color: #444; white-space: nowrap; }
.winctl { margin-left: auto; margin-right: 2px; display: flex; align-self: flex-start; height: 8px; }
.wb { width: 17px; height: 8px; border: 1px solid #7f8fa0; border-top: 0; background: #c4d2e0; }
.wb-x { width: 32px; background: #c84a38; }

.client { flex: 1; display: flex; flex-direction: column; min-height: 0; margin-right: 3px; background: #f0f0f0; border-right: 1px solid #8a98a4; border-top: 1px solid #a8b8c8; }
.menubar { height: 13px; display: flex; align-items: center; padding: 0 0 2px 1.500px; gap: 7.700px; background: #f0f0f0; white-space: nowrap; }
.menubar span { padding: 1px 3px 1px; font-size: 8px; color: #333; }
.menubar .open { padding: 2px 4px 3px; margin: 2px -1px 0; border: 1px solid #8aa0b8; border-bottom: 0; background: #f8f8f8; }

.tools { height: 50px; display: flex; flex-direction: column; border-bottom: 1px solid #999; }
.row { height: 16px; display: flex; align-items: center; }
.lgroup { width: 138px; flex: none; padding-left: 2px; display: flex; align-items: center; overflow: hidden; }
.rgroup { margin-left: 156px; display: flex; align-items: center; }
.rgroup-2 { margin-left: 165px; }
.rgroup-3 { margin-left: 155px; }
.i { width: 15px; height: 14px; flex: none; display: block; }
.i-grip { width: 4px; }
.sh { margin-left: 1px; }
.dd { width: 9px; height: 14px; flex: none; display: block; }
.dd-m { margin: 0 1px 0 3px; }
.gr { width: 3px; height: 12px; flex: none; background: repeating-linear-gradient(180deg, #777 0 2px, transparent 2px 3px); }
.gr-s { width: 3px; }
.gr-d { width: 2px; margin: 0 3px 0 2px; }
.sep { width: 6px; height: 13px; flex: none; background: linear-gradient(#c4c4c4, #c4c4c4) center / 1px 100% no-repeat; }
.sep-n { width: 5px; }
.sep-t { width: 4px; }
.layercombo { width: 45px; height: 14px; background: #fafafa; padding: 3px 0 0 2px; font-size: 8.500px; color: #333; }
.tight { display: flex; align-items: center; gap: .6px; margin-left: 1px; }
.ecombo { width: 33.600px; height: 14px; display: flex; align-items: center; }
.ecombo i { width: 23px; height: 13px; background: #f6f6f6; margin-right: 1px; }

.work { flex: 1; display: flex; min-height: 0; }
.side { width: 35px; flex: none; display: flex; padding-left: 1px; background: #f0f0f0; overflow: hidden; }
.col { width: 16.500px; display: flex; flex-direction: column; align-items: center; gap: .85px; }
.col + .col { gap: 1.500px; }
.dash { width: 12px; height: 4px; margin-top: 1px; background: repeating-linear-gradient(90deg, #777 0 2px, transparent 2px 3px) center / 100% 2px no-repeat; }
.hsep { width: 13px; height: 3px; background: linear-gradient(#c4c4c4, #c4c4c4) center / 100% 1px no-repeat; }
.canvas { position: relative; flex: 1; background: #000; }
.origin { position: absolute; left: 423px; top: 176px; width: 5px; height: 5px; background: #262626; }

.panel { position: absolute; left: 0; bottom: 0; width: 169px; height: 46px; padding: 1px 2px 2px; display: flex; background: #f0f0f0; border-top: 1px solid #999; }
.axes { width: 40px; height: 42px; flex: none; background: #000; }
.axl { font: 9px "Liberation Sans", sans-serif; fill: #d01818; }
.pc1 { width: 44px; margin: -1px 0 0 1px; flex: none; display: flex; flex-direction: column; }
.chk { height: 9.500px; display: flex; align-items: center; gap: 3px; font-size: 8px; }
.box { width: 7px; height: 7px; border: 1px solid #777; background: #fff; font-size: 7px; line-height: 6px; color: #222; }
.snap { height: 20px; margin-top: 3px; text-align: center; background: #ececec; border: 1px solid #c8c8c8; font-family: "Liberation Sans", "Noto Sans CJK SC", sans-serif; font-size: 8px; line-height: 9.300px; }
.pc2 { width: 78px; margin-left: 3px; flex: none; display: flex; flex-direction: column; gap: 1.500px; }
.prow { display: flex; align-items: center; height: 12px; }
.pf { height: 12px; border: 1px solid #c4c4c4; background: #fafafa; font-size: 7.500px; padding-top: 1.500px; overflow: hidden; white-space: nowrap; }
.pf-a { width: 32px; }
.pf-b { width: 22px; background: #ececec; margin-left: 2px; }
.pdd { width: 11px; height: 12px; border: 1px solid #c4c4c4; display: flex; justify-content: center; align-items: center; }
.pdd-l { width: 10px; }
.pdd .dd { height: 10px; width: 9px; }
.fs { height: 12px; border: 1px solid #c8c8c8; background: #ececec; color: #888; text-align: center; font-size: 7.500px; padding-top: 1.500px; }
.prow-c { justify-content: space-between; padding-left: 6px; font-size: 8px; margin-top: 1px; }
.num { width: 21px; height: 11px; background: #fff; border: 1px solid #c0c0c0; font: 8px/9px "Liberation Serif", serif; padding-left: 2px; }

.status { height: 17px; display: flex; align-items: center; padding-left: 2px; background: #f0f0f0; border-top: 1px solid #d8d8d8; }
.coord { width: 114px; height: 14px; padding: 3.500px 0 0 0; background: #f8f8f8; font: 6.800px/7px "Liberation Mono", monospace; color: #222; white-space: nowrap; }
.st-btn { width: 14px; height: 14px; margin-left: 1px; display: flex; justify-content: center; align-items: center; border: 1px solid #d0d0d0; }
.st-btn .i { width: 12px; height: 12px; }
.st-on { background: #f8f8f8; }
.st-combo { width: 47px; height: 14px; margin-left: 1px; padding: 2px 0 0 3px; border: 1px solid #d0d0d0; color: #888; font-size: 8px; white-space: nowrap; overflow: hidden; }
.st-dd { width: 12px; height: 14px; border: 1px solid #d0d0d0; display: flex; justify-content: center; align-items: center; }
.apply { width: 22px; height: 14px; margin-left: 1px; padding-top: 2px; text-align: center; background: #eee; border: 1px solid #d0d0d0; color: #999; font-size: 8px; }
.st-msg { margin-left: 1px; height: 14px; padding: 2px 0 0 1px; flex: 1; background: #f8f8f8; font-size: 8.200px; color: #222; white-space: nowrap; }

.menu { position: absolute; left: 138px; top: 28px; width: 154px; height: 283px; padding: 0 1px; background: linear-gradient(90deg, #f0f0f0 0 15px, #fafafa 15px); border: 1px solid #9aa4ae; border-top: 0; box-shadow: 2px 2px 0 #999; }
.mi { height: 13.600px; display: flex; align-items: center; position: relative; padding-left: 15px; color: #222; white-space: nowrap; border: 1px solid transparent; }
.mi .t { font-family: "Liberation Mono", "Noto Sans CJK SC", monospace; font-size: 8px; }
.mi .k { position: absolute; left: 117px; top: 3px; font: 7px/7px "Liberation Mono", monospace; color: #333; }
.mic { position: absolute; left: 2px; top: 0; width: 12px; height: 12px; }
.dis { color: #bcbcbc; }
.hot { background: #cfe0ee; border-color: #8ab4da; margin: 0 1px; padding-left: 14px; }
.hot .k { left: 116px; }
.menu hr { margin: 2.200px 1px 2.200px 16px; height: 1px; border: 0; background: #d4d4d4; }
.cursor { position: absolute; left: 233px; top: 93px; width: 11px; height: 15px; }

.taskbar { height: 27px; flex: none; display: flex; align-items: stretch; background: linear-gradient(90deg, #2a5578 0, #2b5273 130px, #1f4a68 330px, #294a60 460px, #2c4a5c 540px, #12283a 610px, #0e1e2a 730px, #123a55 790px, #1f5a80 830px, #1f5a80 920px); border-top: 1px solid #9ab0be; }
.orb { width: 40px; flex: none; display: flex; justify-content: center; align-items: center; padding-right: 4px; }
.orb svg { width: 26px; height: 26px; padding: 5px; border-radius: 50%; background: radial-gradient(circle at 50% 35%, #6fb0e0, #1f5a98 70%); border: 1px solid #4a80b0; }
.tasks { display: flex; gap: 1.500px; }
.task { width: 40px; display: flex; justify-content: center; align-items: center; background: linear-gradient(#6f8ea4, #4f7288); border: 1px solid #7e9aac; }
.task svg { width: 24px; height: 24px; }
.task-lt { background: linear-gradient(#8aa2b4, #6c8ba0); border-color: #a0b4c2; }
.task-gh { background: none; border-color: transparent; }
.task-on { background: linear-gradient(#bccdd8, #98b2c2); border-color: #d8e4ea; }
.saplogo { width: 21px; height: 21px; display: flex; justify-content: center; overflow: hidden; background: #000; border: 1.500px solid #10e020; font-family: "Liberation Sans", sans-serif; }
.saplogo b { align-self: center; font-size: 13px; font-style: italic; color: #f01818; line-height: 14px; }
.saplogo em { align-self: flex-end; font-size: 6.500px; font-style: normal; color: #f0e020; line-height: 7px; }
.saplogo u { align-self: flex-start; margin-top: 3px; font-size: 5.500px; color: #f01818; line-height: 6px; text-decoration: none; }
.tray { margin-left: auto; display: flex; align-items: center; color: #dfe8ee; }
.en { font: 7px "Liberation Mono", monospace; margin-right: 5px; }
.ti { width: 13px; height: 13px; margin-right: 2px; flex: none; }
.ti-s { width: 8px; margin-right: 5px; }
.ti-w { margin-right: 4px; }
.clock { width: 63px; margin-left: 2px; display: flex; flex-direction: column; align-items: center; gap: 4px; font: 8.500px/8.500px "Noto Sans", sans-serif; color: #d8e4ec; }
.showd { width: 7px; height: 24px; margin-right: 1px; background: #456c88; border: 1px solid #6a8aa0; }
```
